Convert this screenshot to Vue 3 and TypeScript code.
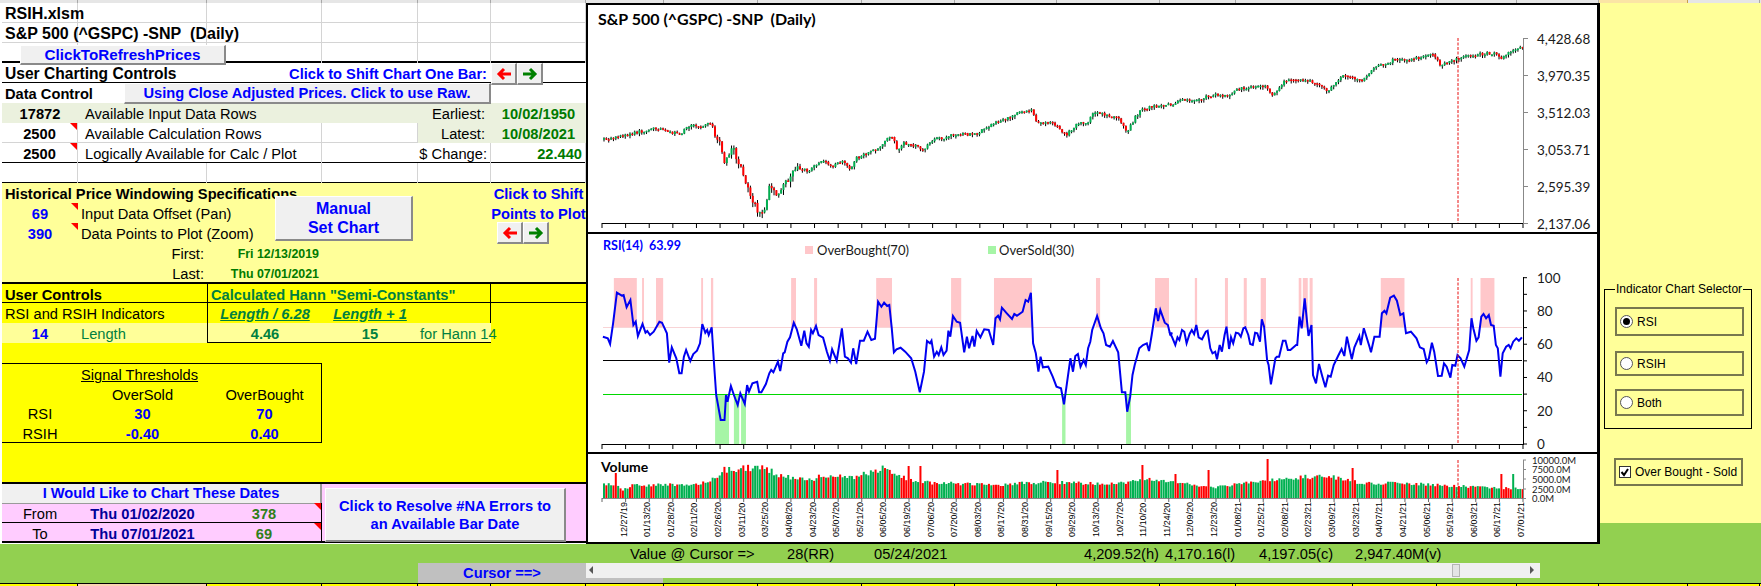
<script setup lang="ts">
// traced coordinates are stored in zoomed units, converted here to page pixels
const SCALE_X = 2.657;
const leftX = (x: number) => 586 + x / SCALE_X;
const rightX = (x: number) => 1170 + x / SCALE_X;

const colWidths = [78, 129, 115, 96, 73, 95, 78, 94, 104, 93, 102, 103, 76, 117, 84, 80, 82, 89, 72];

function pairs(trace: number[], toX: (x: number) => number, oy: number): [number, number][] {
  const out: [number, number][] = [];
  for (let i = 0; i < trace.length; i += 2) out.push([toX(trace[i]), oy + trace[i + 1] / 3]);
  return out;
}

const pricePath = [
  ...pairs([42,420,100,405,200,382,220,400,250,400,270,380,330,372,340,400,355,430,365,480,385,440,400,480,420,530,430,580,445,610,465,650,475,610,485,560,510,580,530,550,550,510,590,510,630,480,650,500,680,480,700,510,715,475,780,440,800,410,815,415,825,460,840,430,880,440,890,455,920,420,990,400,1035,405,1060,380,1180,325,1195,370,1235,365,1275,405,1295,378,1330,365,1350,335,1410,355,1435,395,1460,345,1480,325,1568,310], leftX, 0),
  ...pairs([0,310,40,295,70,303,95,287,130,285,160,285,180,265,210,265,225,255,250,255,270,285,300,245,340,235,370,245,390,250,415,275,440,240,465,225,505,245,540,205,600,175,630,180,695,165,715,195,745,185,770,170,860,158,880,175,900,155,935,143], rightX, 0),
];

const rsiPath = [
  ...pairs([45,320,58,325,64,342,72,280,82,188,95,197,100,195,108,232,118,210,126,285,132,275,138,318,150,282,158,308,163,303,170,315,180,305,195,275,202,278,215,310,221,398,228,352,240,385,248,430,254,430,260,380,266,360,277,393,285,372,295,362,303,340,309,282,317,308,322,300,326,315,334,292,340,400,346,495,358,570,368,570,372,495,376,515,385,468,393,495,403,525,410,490,422,522,428,465,433,485,442,460,455,455,460,487,466,487,478,462,487,430,492,420,498,427,510,395,516,423,524,370,528,367,535,335,542,322,552,278,560,298,572,347,580,302,586,340,592,350,598,300,603,310,611,288,618,315,630,323,640,365,648,392,654,358,666,392,680,295,688,380,696,385,704,398,710,355,718,402,728,332,738,332,748,305,758,330,768,326,776,215,785,230,792,218,800,228,806,225,812,290,818,367,825,358,836,353,848,365,864,385,875,425,887,487,898,425,906,333,914,340,918,332,925,380,932,365,937,375,944,352,950,375,958,362,963,302,968,320,975,258,985,275,994,278,1005,367,1012,320,1018,355,1027,318,1032,350,1038,303,1048,322,1058,298,1070,300,1082,345,1088,265,1095,257,1100,268,1105,233,1118,250,1132,267,1138,252,1145,257,1160,245,1168,210,1175,215,1182,188,1188,340,1195,370,1202,425,1208,380,1214,412,1228,410,1240,440,1250,470,1262,475,1270,523,1287,385,1294,425,1300,378,1307,372,1314,410,1322,390,1328,405,1334,355,1340,335,1345,300,1358,258,1368,295,1375,310,1382,345,1392,350,1400,333,1414,367,1424,487,1433,487,1438,545,1446,500,1452,435,1458,405,1470,355,1480,345,1490,340,1496,363,1503,315,1514,235,1520,273,1526,240,1538,278,1546,285,1552,313,1558,310], leftX, 230),
  ...pairs([0,310,5,320,14,345,20,322,25,330,32,300,38,305,44,340,52,312,58,300,64,312,70,285,76,322,85,328,95,305,100,302,107,355,113,370,120,365,125,388,132,345,138,365,145,315,150,290,157,357,162,322,168,340,175,308,182,310,188,320,195,295,200,292,208,315,213,342,220,345,226,308,232,310,239,335,244,268,250,290,258,390,262,405,268,463,280,385,284,380,290,380,300,332,307,332,313,360,320,360,335,345,338,345,344,260,350,295,358,205,368,318,376,285,380,435,388,460,396,402,405,440,413,472,420,437,427,440,435,405,447,377,456,357,463,378,470,320,483,388,490,352,503,318,507,345,515,295,530,350,534,367,543,320,557,320,563,250,570,242,575,250,585,203,595,197,603,212,612,255,620,250,627,310,640,305,655,325,664,352,674,357,682,397,688,385,696,338,702,365,712,438,722,437,728,400,735,410,745,443,750,405,758,407,764,375,772,385,782,410,795,360,801,265,806,295,814,332,820,322,827,260,833,252,840,265,847,255,853,285,860,287,866,345,871,355,878,440,884,370,893,350,900,345,905,355,912,335,920,325,927,332,935,322], rightX, 230),
];
const rsiLine = rsiPath.map(([x, y]) => `${x.toFixed(1)},${y.toFixed(1)}`).join(" ");

const zone = (from: number, to: number, toX: (x: number) => number) => ({ x: toX(from), w: (to - from) / SCALE_X });
const overBought = [
  ...[[74,135],[149,154],[186,205],[306,311],[332,338],[545,558],[606,614],[771,813],[970,997],[1084,1185],[1355,1366],[1512,1549]].map(([a, b]) => zone(a, b, leftX)),
  ...[[66,72],[146,154],[196,204],[241,255],[342,349],[353,366],[371,379],[560,623],[799,804],[825,862]].map(([a, b]) => zone(a, b, rightX)),
];
const overSold = [[343,380],[393,407],[412,425],[1265,1274],[1435,1448]].map(([a, b]) => zone(a, b, leftX));

const volumeEnvelope: [number, number][] = [
  ...[[45,45],[80,42],[92,25],[120,40],[300,45],[340,65],[365,90],[400,95],[460,100],[490,85],[520,70],[600,60],[630,75],[700,65],[790,95],[850,60],[900,50],[1100,42],[1180,50],[1250,50],[1400,45],[1480,60],[1568,50]].map(([x, h]): [number, number] => [leftX(x), h]),
  ...[[0,50],[120,35],[250,55],[380,70],[420,70],[500,50],[650,45],[850,33],[935,30]].map(([x, h]): [number, number] => [rightX(x), h]),
];

function interp(path: [number, number][], x: number): number {
  for (let i = 1; i < path.length; i++) {
    if (x <= path[i][0]) {
      const [x0, y0] = path[i - 1];
      const [x1, y1] = path[i];
      return y0 + ((y1 - y0) * (x - x0)) / Math.max(x1 - x0, 0.01);
    }
  }
  return path[path.length - 1][1];
}

let seed = 4711;
const rnd = () => (seed = (seed * 16807) % 2147483647) / 2147483647;

const X0 = 603;
const STEP = 921 / 390;
let prev = interp(pricePath, X0);
const bars = Array.from({ length: 390 }, (_, i) => {
  const x = X0 + i * STEP;
  const mid = interp(pricePath, x);
  const amp = x > 712 && x < 800 ? 4 : 1.7;
  const close = mid + (rnd() - 0.5) * 2 * amp;
  const up = close < prev;
  const top = Math.min(close, prev);
  const height = Math.max(Math.abs(close - prev), 1.5);
  prev = close;
  return {
    x,
    up,
    top,
    height,
    wickTop: top - rnd() * amp * 0.8,
    wickBottom: top + height + rnd() * amp * 1.6,
    volume: (interp(volumeEnvelope, x) / 3) * (0.82 + rnd() * 0.22),
    volumeUp: rnd() > 0.38,
  };
});

const spikes: [number, number, boolean][] = [
  [leftX(75), 25, false], [leftX(855), 32, false], [leftX(885), 32, false], [leftX(1250), 28, false],
  [leftX(1476), 33, false], [rightX(12), 24, false], [rightX(100), 28, false], [rightX(255), 39, false],
  [rightX(480), 30, false], [rightX(875), 24, false], [rightX(910), 24, true],
];
for (const [x, h, up] of spikes) {
  const bar = bars[Math.round((x - X0) / STEP)];
  bar.volume = h;
  bar.volumeUp = up;
}

const ticks = Array.from({ length: 40 }, (_, i) => 602 + i * (921 / 39));
const dates = [
  "12/27/19", "01/13/20", "01/28/20", "02/11/20", "02/26/20", "03/11/20", "03/25/20", "04/08/20", "04/23/20", "05/07/20",
  "05/21/20", "06/05/20", "06/19/20", "07/06/20", "07/20/20", "08/03/20", "08/17/20", "08/31/20", "09/15/20", "09/29/20",
  "10/13/20", "10/27/20", "11/10/20", "11/24/20", "12/09/20", "12/23/20", "01/08/21", "01/25/21", "02/08/21", "02/23/21",
  "03/09/21", "03/23/21", "04/07/21", "04/21/21", "05/06/21", "05/19/21", "06/03/21", "06/17/21", "07/01/21",
];

const priceAxis = [
  { y: 38.5, label: "4,428.68" }, { y: 75.5, label: "3,970.35" }, { y: 112.5, label: "3,512.03" },
  { y: 149.5, label: "3,053.71" }, { y: 186.5, label: "2,595.39" }, { y: 223.5, label: "2,137.06" },
];
const rsiY = (v: number) => 444 - v * 1.663;
const rsiAxis = Array.from({ length: 11 }, (_, i) => i * 10);
const volumeAxis = [
  { y: 460, label: "10000.0M" }, { y: 469.5, label: "7500.0M" }, { y: 479, label: "5000.0M" },
  { y: 489, label: "2500.0M" }, { y: 498.5, label: "0.0M" },
];
</script>

<template>
  <div class="app">
    <div class="col-heads">
      <i v-for="(w, i) in colWidths" :key="i" :class="{ picked: i === 17 }" :style="{ width: w + 'px' }"></i>
    </div>

    <div class="main">
      <div class="sheet">
        <div class="row lines"><b class="cell title">RSIH.xlsm</b><i class="cell"></i><i class="cell"></i><i class="cell"></i><i class="cell"></i><i class="cell"></i></div>
        <div class="row lines"><b class="cell title">S&amp;P 500 (^GSPC) -SNP&nbsp; (Daily)</b><i class="cell"></i><i class="cell"></i><i class="cell"></i><i class="cell"></i><i class="cell"></i></div>
        <div class="row lines thick"><i class="cell"></i><i class="cell"></i><i class="cell"></i><i class="cell"></i><i class="cell"></i><i class="cell"></i></div>

        <div class="row black-line">
          <b class="cell big">User Charting Controls</b>
          <b class="cell blue rt shift-label">Click to Shift Chart One Bar:</b>
        </div>
        <div class="row"><b class="cell">Data Control</b></div>

        <div class="row sage">
          <b class="cell ctr">17872</b>
          <span class="cell pad">Available Input Data Rows</span>
          <span class="cell rt e-col">Earliest:</span>
          <b class="cell ctr green">10/02/1950</b>
        </div>
        <div class="row lines">
          <b class="cell ctr note">2500</b>
          <span class="cell pad wide">Available Calculation Rows</span>
          <i class="cell"></i>
          <span class="cell rt sage-cell e-col">Latest:</span>
          <b class="cell ctr green sage-cell">10/08/2021</b>
        </div>
        <div class="row lines black-line">
          <b class="cell ctr note">2500</b>
          <span class="cell pad wide">Logically Available for Calc / Plot</span>
          <span class="cell rt d-e">$ Change:</span>
          <b class="cell rt green">22.440</b>
        </div>
        <div class="row lines black-line"><i class="cell"></i><i class="cell"></i><i class="cell"></i><i class="cell"></i><i class="cell"></i><i class="cell"></i></div>

        <div class="pale">
          <div class="row">
            <b class="cell">Historical Price Windowing Specifications</b>
            <b class="cell blue ctr f-col">Click to Shift</b>
          </div>
          <div class="row">
            <b class="cell ctr blue note">69</b>
            <span class="cell">Input Data Offset (Pan)</span>
            <b class="cell blue ctr f-col">Points to Plot</b>
          </div>
          <div class="row">
            <b class="cell ctr blue note">390</b>
            <span class="cell">Data Points to Plot (Zoom)</span>
          </div>
          <div class="row">
            <span class="cell rt b-col">First:</span>
            <b class="cell rt green small c-col">Fri 12/13/2019</b>
          </div>
          <div class="row">
            <span class="cell rt b-col">Last:</span>
            <b class="cell rt green small c-col">Thu 07/01/2021</b>
          </div>
        </div>

        <div class="bright">
          <div class="row black-line top-line">
            <b class="cell">User Controls</b>
            <b class="cell hann c-col divided hann-title">Calculated Hann "Semi-Constants"</b>
          </div>
          <div class="row">
            <span class="cell">RSI and RSIH Indicators</span>
            <b class="cell ctr hann formula c-col left-rule">Length / 6.28</b>
            <b class="cell ctr hann formula d-col">Length + 1</b>
            <i class="cell right-rule"></i>
          </div>
          <div class="row length-row">
            <b class="cell ctr blue">14</b>
            <span class="cell hann">Length</span>
            <b class="cell ctr hann left-rule under">4.46</b>
            <b class="cell ctr hann under">15</b>
            <span class="cell hann under">for Hann 14</span>
          </div>
          <div class="row"></div>
          <div class="signal">
            <div class="row"><u class="cell b-start">Signal Thresholds</u></div>
            <div class="row"><span class="cell ctr b-col">OverSold</span><span class="cell ctr">OverBought</span></div>
            <div class="row"><span class="cell ctr">RSI</span><b class="cell ctr blue">30</b><b class="cell ctr blue">70</b></div>
            <div class="row"><span class="cell ctr">RSIH</span><b class="cell ctr blue">-0.40</b><b class="cell ctr blue">0.40</b></div>
          </div>
          <div class="row"></div>
          <div class="row"></div>
        </div>

        <div class="pink">
          <div class="row">
            <b class="cell ctr blue dates-head">I Would Like to Chart These Dates</b>
          </div>
          <div class="row">
            <span class="cell ctr ruled">From</span>
            <b class="cell ctr navy ruled">Thu 01/02/2020</b>
            <b class="cell ctr olive ruled note boxed">378</b>
          </div>
          <div class="row last">
            <span class="cell ctr">To</span>
            <b class="cell ctr navy">Thu 07/01/2021</b>
            <b class="cell ctr olive note boxed">69</b>
          </div>
        </div>

        <!-- form buttons float over the cells -->
        <button class="btn refresh">ClickToRefreshPrices</button>
        <button class="btn raw">Using Close Adjusted Prices. Click to use Raw.</button>
        <button class="btn manual">Manual<br />Set Chart</button>
        <button class="btn resolve">Click to Resolve #NA Errors to<br />an Available Bar Date</button>
        <div class="arrows one-bar">
          <button class="btn arrow"><svg width="16" height="14" viewBox="0 0 16 14"><path d="M15 7H4M8 2L3 7l5 5" fill="none" stroke="#f00" stroke-width="3" /></svg></button>
          <button class="btn arrow"><svg width="16" height="14" viewBox="0 0 16 14"><path d="M1 7h11M8 2l5 5-5 5" fill="none" stroke="#008000" stroke-width="3" /></svg></button>
        </div>
        <div class="arrows points">
          <button class="btn arrow"><svg width="16" height="14" viewBox="0 0 16 14"><path d="M15 7H4M8 2L3 7l5 5" fill="none" stroke="#f00" stroke-width="3" /></svg></button>
          <button class="btn arrow"><svg width="16" height="14" viewBox="0 0 16 14"><path d="M1 7h11M8 2l5 5-5 5" fill="none" stroke="#008000" stroke-width="3" /></svg></button>
        </div>
      </div>

      <div class="charts">
        <svg class="chart price" width="1009" height="227" viewBox="588 5 1009 227">
          <text x="598" y="25" class="chart-title">S&amp;P 500 (^GSPC) -SNP&nbsp; (Daily)</text>
          <g v-for="(b, i) in bars" :key="i">
            <rect :x="b.x + 0.5" :y="b.wickTop" width="1" :height="b.wickBottom - b.wickTop" fill="#000" />
            <rect :x="b.x" :y="b.top" width="2" :height="b.height" :fill="b.up ? '#00b050' : '#ff0000'" />
          </g>
          <line x1="602" x2="1523" y1="223.5" y2="223.5" stroke="#000" />
          <line v-for="t in ticks" :key="t" :x1="t" :x2="t" y1="223" y2="228" stroke="#000" />
          <line x1="1523.5" x2="1523.5" y1="38" y2="224" stroke="#888" />
          <g v-for="a in priceAxis" :key="a.label">
            <line x1="1523" x2="1528" :y1="a.y" :y2="a.y" stroke="#888" />
            <text x="1537" :y="a.y + 5" class="axis">{{ a.label }}</text>
          </g>
          <line x1="1458" x2="1458" y1="38" y2="223" class="cursor" />
        </svg>

        <svg class="chart rsi" width="1009" height="218" viewBox="588 234 1009 218">
          <text x="603" y="250" class="rsi-title">RSI(14)&nbsp; 63.99</text>
          <rect x="805" y="246" width="8" height="8" fill="#ffc7ca" />
          <text x="817" y="255" class="legend">OverBought(70)</text>
          <rect x="988" y="246" width="8" height="8" fill="#a6f5a6" />
          <text x="999" y="255" class="legend">OverSold(30)</text>
          <rect v-for="z in overBought" :key="z.x" :x="z.x" y="278" :width="z.w" height="49" fill="#ffc7ca" />
          <rect v-for="z in overSold" :key="z.x" :x="z.x" y="394" :width="z.w" height="50" fill="#a6f5a6" />
          <line x1="603" x2="1522" y1="327.5" y2="327.5" stroke="#f8d4d6" />
          <line x1="603" x2="1522" y1="360.5" y2="360.5" stroke="#000" />
          <line x1="603" x2="1522" y1="394.5" y2="394.5" stroke="#00d800" />
          <polyline :points="rsiLine" fill="none" stroke="#0000f0" stroke-width="2" />
          <line x1="602" x2="1523" y1="444.5" y2="444.5" stroke="#000" />
          <line v-for="t in ticks" :key="t" :x1="t" :x2="t" y1="444" y2="449" stroke="#000" />
          <line x1="1523.5" x2="1523.5" y1="277" y2="445" stroke="#000" />
          <g v-for="v in rsiAxis" :key="v">
            <line x1="1523" x2="1527" :y1="rsiY(v)" :y2="rsiY(v)" stroke="#000" />
            <text v-if="v % 20 === 0" x="1537" :y="rsiY(v) + 5" class="axis">{{ v }}</text>
          </g>
          <line x1="1458" x2="1458" y1="278" y2="444" class="cursor" />
        </svg>

        <svg class="chart volume" width="1009" height="88" viewBox="588 454 1009 88">
          <text x="601" y="472" class="vol-title">Volume</text>
          <rect v-for="(b, i) in bars" :key="i" :x="b.x" :y="498 - b.volume" width="2" :height="b.volume" :fill="b.volumeUp ? '#00b050' : '#ff0000'" />
          <line x1="602" x2="1523" y1="498.5" y2="498.5" stroke="#888" />
          <line v-for="t in ticks" :key="t" :x1="t" :x2="t" y1="498" y2="502" stroke="#666" />
          <line x1="1523.5" x2="1523.5" y1="460" y2="499" stroke="#888" />
          <g v-for="a in volumeAxis" :key="a.label">
            <line x1="1523" x2="1526" :y1="a.y" :y2="a.y" stroke="#888" />
            <text x="1532" :y="a.y + 3.5" class="vol-axis">{{ a.label }}</text>
          </g>
          <text
            v-for="(d, i) in dates"
            :key="d"
            :x="ticks[i + 1] + 1"
            y="537"
            :transform="`rotate(-90 ${ticks[i + 1] + 1} 537)`"
            class="date"
          >{{ d }}</text>
          <line x1="1458" x2="1458" y1="460" y2="498" class="cursor" />
        </svg>
      </div>

      <div class="side">
        <div class="side-panel">
          <fieldset class="selector">
            <legend>Indicator Chart Selector</legend>
            <label class="option rsi-opt"><span class="radio on"></span>RSI</label>
            <label class="option rsih-opt"><span class="radio"></span>RSIH</label>
            <label class="option both-opt"><span class="radio"></span>Both</label>
          </fieldset>
          <label class="option check-opt">
            <svg class="check" width="12" height="12" viewBox="0 0 12 12"><rect x="0.5" y="0.5" width="11" height="11" fill="#fff" stroke="#333" /><path d="M2.5 6l2.5 3 4-6" fill="none" stroke="#000" stroke-width="2" /></svg>
            Over Bought - Sold
          </label>
        </div>
      </div>
    </div>

    <div class="status">
      <span class="s1">Value @ Cursor =&gt;</span>
      <span class="s2">28(RR)</span>
      <span class="s3">05/24/2021</span>
      <span class="s4">4,209.52(h)</span>
      <span class="s5">4,170.16(l)</span>
      <span class="s6">4,197.05(c)</span>
      <span>2,947.40M(v)</span>
    </div>

    <div class="cursor-row">
      <b class="cursor-label">Cursor ==&gt;</b>
      <div class="scroll-wrap">
        <div class="scrollbar">
          <span class="tri-left"></span>
          <span class="thumb"></span>
          <span class="tri-right"></span>
        </div>
        <div class="scroll-under"></div>
      </div>
    </div>

    <div class="bottom-cells">
      <i v-for="(w, i) in colWidths" :key="i" :class="{ tan: i === 1 }" :style="{ width: w + 'px' }"></i>
    </div>
  </div>
</template>

<style scoped>
.app {
  width: 1761px;
  height: 586px;
  overflow: hidden;
  background: #92d050;
  font-family: "Liberation Sans", Arial, sans-serif;
  font-size: 14.67px;
  color: #000;
}

.col-heads,
.bottom-cells {
  display: flex;
  height: 3px;
  background: #e6e6e6;
}
.col-heads i {
  border-right: 1px solid #a8a8a8;
  box-sizing: border-box;
}
.col-heads .picked {
  background: #fbe5a5;
  border-right: 1px solid #c9a04a;
}

.main {
  display: flex;
  height: 541px;
}

.sheet {
  position: relative;
  width: 586px;
  flex: none;
  padding-left: 2px;
  box-sizing: border-box;
  background: #fff;
}

.row {
  display: grid;
  grid-template-columns: 76px 129px 115px 96px 73px 95px;
  height: 20px;
  box-sizing: border-box;
}
.cell {
  display: block;
  position: relative;
  padding: 0 3px;
  line-height: 22px;
  height: 20px;
  box-sizing: border-box;
  white-space: nowrap;
  font-style: normal;
}
.ctr {
  text-align: center;
}
.rt {
  text-align: right;
}
.pad {
  padding-left: 7px;
}
.wide {
  grid-column: 2 / 4;
}
.title {
  font-size: 16px;
}
.big {
  font-size: 15.6px;
}
.small {
  font-size: 12.4px;
}
.blue {
  color: #0000ff;
}
.green {
  color: #007a00;
}
.navy {
  color: #000099;
}
.olive {
  color: #2f7f1a;
}
.hann {
  color: #008040;
}
.formula {
  font-style: italic;
  text-decoration: underline;
}

.lines {
  border-bottom: 1px solid #d4d4d4;
}
.lines .cell {
  border-right: 1px solid #d4d4d4;
}
.thick {
  border-bottom: 2px solid #000;
}
.black-line {
  border-bottom: 1px solid #000;
}

.shift-label {
  grid-column: 2 / 6;
  padding-right: 4px;
}
.e-col {
  grid-column: 5;
  padding-right: 6px;
}
.d-e {
  grid-column: 4 / 6;
  padding-right: 3px;
}
.sage,
.sage-cell {
  background: #ebf1de;
}
.lines .sage-cell {
  border-right: 0;
}
.f-col {
  grid-column: 6;
  padding: 0;
}
.b-col {
  grid-column: 2;
}
.c-col {
  grid-column: 3;
}
.d-col {
  grid-column: 4;
}
.b-start {
  grid-column: 2 / 4;
}
.note::after {
  content: "";
  position: absolute;
  top: 0;
  right: 0;
  border-top: 7px solid #f00;
  border-left: 7px solid transparent;
}

.pale {
  background: #ffff99;
}
.pale .row:first-child .cell:first-child {
  grid-column: 1 / 6;
}
.bright {
  background: #ffff00;
}
.top-line {
  border-top: 2px solid #000;
  margin-top: -1px;
  height: 21px;
}
.divided {
  border-left: 1px solid #000;
  grid-column: 3 / 6;
  border-right: 1px solid #000;
}
.left-rule {
  border-left: 1px solid #000;
}
.right-rule {
  grid-column: 5;
  border-right: 1px solid #000;
}
.under {
  border-bottom: 1px solid #000;
}
.length-row {
  background: linear-gradient(#ffff99, #ffff99) 0 0 / 489px 100% no-repeat;
}
.length-row .under:nth-child(3) {
  grid-column: 3;
}
.length-row .under:nth-child(4) {
  grid-column: 4;
}
.length-row .under:last-child {
  grid-column: 5;
  padding-left: 2px;
}
.signal {
  width: 320px;
  height: 80px;
  box-sizing: border-box;
  border: 1px solid #000;
  border-left: 0;
}
.signal .row {
  height: 19.5px;
}

.pink {
  background: #ffccff;
  border-top: 2px solid #000;
  margin-top: -1px;
}
.dates-head {
  grid-column: 1 / 4;
  background: #f0f0f0;
  border-bottom: 1px solid #9a9a9a;
  border-right: 2px solid #9a9a9a;
  line-height: 18px;
}
.pink .row:first-child {
  height: 19px;
}
.ruled {
  border-bottom: 1px solid #000;
}
.boxed {
  border-right: 1px solid #000;
}
.last {
  border-bottom: 2px solid #000;
}

.btn {
  display: block;
  padding: 0;
  margin: 0;
  font: bold 14.67px "Liberation Sans", Arial, sans-serif;
  color: #0000ff;
  background: #f0f0f0;
  border: 0;
  border-right: 2px solid #8a8a8a;
  border-bottom: 2px solid #8a8a8a;
  border-top: 1px solid #fff;
  border-left: 1px solid #fff;
  box-sizing: border-box;
}
.refresh {
  position: absolute;
  left: 20px;
  top: 42px;
  width: 206px;
  height: 20px;
  font-size: 15.2px;
}
.raw {
  position: absolute;
  left: 124px;
  top: 80px;
  width: 367px;
  height: 21px;
}
.manual {
  position: absolute;
  left: 275px;
  top: 193px;
  width: 138px;
  height: 45px;
  font-size: 16px;
  line-height: 19px;
}
.resolve {
  position: absolute;
  left: 325px;
  top: 485px;
  width: 241px;
  height: 54px;
  line-height: 18px;
}
.arrows {
  position: absolute;
  display: flex;
  height: 22px;
}
.one-bar {
  left: 491px;
  top: 60px;
}
.points {
  left: 497px;
  top: 219px;
}
.arrow {
  width: 26px;
  height: 22px;
  display: flex;
  align-items: center;
  justify-content: center;
}

.charts {
  display: flex;
  flex-direction: column;
  gap: 2px;
  width: 1014px;
  flex: none;
  box-sizing: border-box;
  background: #000;
  border: solid #000;
  border-width: 2px 3px 2px 2px;
}
.chart {
  display: block;
  background: #fff;
  flex: none;
}
.chart text {
  font-family: Lato, "Liberation Sans", sans-serif;
  fill: #1a1a1a;
}
.chart .chart-title {
  font-size: 16px;
  font-weight: 700;
  fill: #000;
}
.chart .axis {
  font-size: 13.5px;
}
.chart .rsi-title {
  font-size: 12.5px;
  font-weight: 700;
  fill: #0000ff;
}
.chart .legend {
  font-size: 13px;
}
.chart .vol-title {
  font-size: 14px;
  font-weight: 700;
  fill: #000;
}
.chart .vol-axis {
  font-size: 9.5px;
}
.chart .date {
  font-family: "Liberation Sans", Arial, sans-serif;
  font-size: 9px;
  fill: #000;
}
.cursor {
  stroke: #e81010;
  stroke-dasharray: 3 1.5;
}

.side {
  flex: 1;
}
.side-panel {
  height: 520px;
  box-sizing: border-box;
  padding: 278px 0 0 4px;
  background: #ffff99;
  font-family: "Liberation Sans", Arial, sans-serif;
  font-size: 12px;
  white-space: nowrap;
}
.selector {
  width: 148px;
  height: 148px;
  margin: 0;
  padding: 0 0 0 10px;
  box-sizing: border-box;
  border: 1px solid #000;
}
.selector legend {
  margin-left: 0;
  padding: 0 1px;
  line-height: 16px;
}
.option {
  display: flex;
  align-items: center;
  gap: 4px;
  width: 129px;
  padding-left: 3px;
  box-sizing: border-box;
  border: 2px solid #77774f;
}
.rsi-opt {
  margin-top: 10px;
  height: 29px;
}
.rsih-opt {
  margin-top: 15px;
  height: 25px;
}
.both-opt {
  margin-top: 13px;
  height: 27px;
}
.check-opt {
  margin: 29px 0 0 10px;
  height: 28px;
}
.radio {
  position: relative;
  width: 11px;
  height: 11px;
  border-radius: 50%;
  background: #fff;
  border: 1px solid #555;
  flex: none;
}
.radio.on::after {
  content: "";
  position: absolute;
  inset: 2px;
  border-radius: 50%;
  background: #000;
}
.check {
  flex: none;
}

.status {
  display: flex;
  height: 19px;
  line-height: 21px;
  padding-left: 630px;
  white-space: nowrap;
}
.s1 {
  width: 157px;
}
.s2 {
  width: 87px;
}
.s3 {
  width: 210px;
}
.s4 {
  width: 81px;
}
.s5 {
  width: 94px;
}
.s6 {
  width: 96px;
}

.cursor-row {
  display: flex;
  height: 20px;
  padding-left: 418px;
}
.cursor-label {
  width: 168px;
  background: #c0c0c0;
  color: #0000ff;
  line-height: 20px;
  text-align: center;
  flex: none;
}
.scroll-wrap {
  width: 954px;
}
.scrollbar {
  position: relative;
  height: 15px;
  background: #f0f0f0;
}
.tri-left,
.tri-right {
  position: absolute;
  top: 3px;
  border-top: 4px solid transparent;
  border-bottom: 4px solid transparent;
}
.tri-left {
  left: 3px;
  border-right: 4px solid #555;
}
.tri-right {
  right: 6px;
  border-left: 4px solid #555;
}
.thumb {
  position: absolute;
  left: 866px;
  top: 1px;
  width: 8px;
  height: 13px;
  background: #e4e4e4;
  border: 1px solid #b5b5b5;
  box-sizing: border-box;
}
.scroll-under {
  width: 77px;
  height: 5px;
  background: #c0c0c0;
}

.bottom-cells {
  background: #ffff00;
  border-top: 1px solid #000;
}
.bottom-cells i {
  box-sizing: border-box;
  border-right: 1px solid #000;
}
.bottom-cells .tan {
  background: #fcd5b4;
}
</style>
